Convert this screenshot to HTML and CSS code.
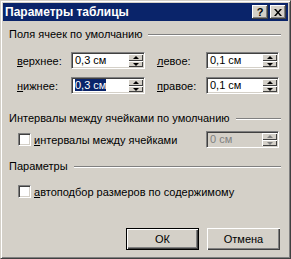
FILE: index.html
```html
<!DOCTYPE html>
<html lang="ru">
<head>
  <meta charset="UTF-8">
  <title>Параметры таблицы</title>
  <link rel="stylesheet" href="styles.css">
</head>
<body>
<div class="window">
  <div class="titlebar">
    <span class="title">Параметры таблицы</span>
    <div class="caption-buttons">
      <span class="cap-btn help">?</span>
      <span class="cap-btn close">
        <svg width="8" height="7" viewBox="0 0 8 7"><path d="M0 0h2l2 2.5L6 0h2L5 3.5 8 7H6L4 4.5 2 7H0l3-3.5z" fill="#000"/></svg>
      </span>
    </div>
  </div>

  <div class="content">
    <!-- поля ячеек -->
    <div class="group-head first">Поля ячеек по умолчанию<span class="rule"></span></div>
    <div class="margins">
      <span class="label"><u>в</u>ерхнее:</span>
      <div class="field">
        <span class="value">0,3 см</span>
        <span class="spinner"><span class="spin up"></span><span class="spin down"></span></span>
      </div>
      <span class="label right"><u>л</u>евое:</span>
      <div class="field">
        <span class="value">0,1 см</span>
        <span class="spinner"><span class="spin up"></span><span class="spin down"></span></span>
      </div>

      <span class="label"><u>н</u>ижнее:</span>
      <div class="field">
        <span class="value"><span class="sel">0,3 см</span></span>
        <span class="spinner"><span class="spin up"></span><span class="spin down"></span></span>
      </div>
      <span class="label right"><u>п</u>равое:</span>
      <div class="field">
        <span class="value">0,1 см</span>
        <span class="spinner"><span class="spin up"></span><span class="spin down"></span></span>
      </div>
    </div>

    <!-- интервалы -->
    <div class="group-head">Интервалы между ячейками по умолчанию<span class="rule"></span></div>
    <div class="check-row spacing">
      <span class="checkbox"></span>
      <span class="check-label"><u>и</u>нтервалы между ячейками</span>
      <div class="field disabled">
        <span class="value">0 см</span>
        <span class="spinner"><span class="spin up"></span><span class="spin down"></span></span>
      </div>
    </div>

    <!-- параметры -->
    <div class="group-head">Параметры<span class="rule"></span></div>
    <div class="check-row autofit">
      <span class="checkbox"></span>
      <span class="check-label"><u>а</u>втоподбор размеров по содержимому</span>
    </div>

    <div class="buttons">
      <span class="btn default">ОК</span>
      <span class="btn">Отмена</span>
    </div>
  </div>
</div>
</body>
</html>
```

FILE: styles.css
```css
body {
  margin: 0;
  font-family: "Liberation Sans", Arial, sans-serif;
  font-size: 11px;
  color: #000;
  background: #d4d0c8;
}
.window {
  width: 291px;
  height: 259px;
  box-sizing: border-box;
  background: #d4d0c8;
  border: 1px solid;
  border-color: #d4d0c8 #404040 #404040 #d4d0c8;
  box-shadow: inset 1px 1px #fff, inset -1px -1px #808080;
  padding: 2px;
  display: flex;
  flex-direction: column;
}
.titlebar {
  height: 18px;
  flex: none;
  background: #0a246a;
  color: #fff;
  display: flex;
  align-items: center;
  justify-content: space-between;
  padding: 0 2px;
}
.title {
  font-weight: bold;
  font-size: 12px;
}
.caption-buttons {
  display: flex;
  gap: 2px;
}
.cap-btn {
  width: 16px;
  height: 14px;
  box-sizing: border-box;
  background: #d4d0c8;
  box-shadow: inset -1px -1px #404040, inset 1px 1px #fff, inset -2px -2px #808080;
  display: flex;
  align-items: center;
  justify-content: center;
  color: #000;
}
.cap-btn.help {
  font-weight: bold;
  font-size: 11px;
  line-height: 14px;
}
.content {
  flex: 1;
  display: flex;
  flex-direction: column;
  padding: 0 7px 6px 6px;
}
.group-head {
  display: flex;
  align-items: center;
  gap: 6px;
  height: 13px;
  line-height: 13px;
  margin-top: 18px;
}
.group-head.first {
  margin-top: 7px;
}
.rule {
  flex: 1;
  border-top: 1px solid #808080;
  border-bottom: 1px solid #fff;
}
.margins {
  display: grid;
  grid-template-columns: 54px 74px 61px 73px;
  grid-auto-rows: 17px;
  row-gap: 8px;
  margin-top: 11px;
  padding-left: 8px;
  align-items: center;
}
.label.right {
  padding-left: 12px;
}
.field {
  height: 17px;
  box-sizing: border-box;
  background: #fff;
  border: 1px solid;
  border-color: #808080 #fff #fff #808080;
  box-shadow: inset 1px 1px #404040, inset -1px -1px #d4d0c8;
  padding: 1px 1px 1px 2px;
  display: flex;
  align-items: center;
  justify-content: space-between;
}
.value {
  line-height: 13px;
  padding-left: 1px;
}
.sel {
  background: #0a246a;
  color: #fff;
}
.spinner {
  width: 15px;
  height: 13px;
  display: flex;
  flex-direction: column;
}
.spin {
  background: #d4d0c8;
  box-shadow: inset 1px 1px #fff, inset -1px -1px #404040;
  display: flex;
  align-items: center;
  justify-content: center;
}
.spin.up {
  height: 7px;
}
.spin.down {
  height: 6px;
}
.spin::before {
  content: "";
  border-left: 3px solid transparent;
  border-right: 3px solid transparent;
}
.spin.up::before {
  border-bottom: 3px solid #000;
}
.spin.down::before {
  border-top: 3px solid #000;
}
.field.disabled {
  width: 73px;
  margin-left: auto;
  margin-right: 2px;
  background: #d4d0c8;
  color: #808080;
}
.field.disabled .spin.up::before {
  border-bottom-color: #808080;
}
.field.disabled .spin.down::before {
  border-top-color: #808080;
}
.check-row {
  display: flex;
  align-items: center;
  padding-left: 9px;
}
.check-row.spacing {
  height: 17px;
  margin-top: 6px;
}
.check-row.autofit {
  height: 13px;
  margin-top: 12px;
}
.group-head + .check-row.autofit {
  margin-top: 12px;
}
.check-row.spacing + .group-head {
  margin-top: 12px;
}
.checkbox {
  width: 13px;
  height: 13px;
  box-sizing: border-box;
  background: #fff;
  border: 1px solid;
  border-color: #808080 #fff #fff #808080;
  box-shadow: inset 1px 1px #404040, inset -1px -1px #d4d0c8;
}
.check-label {
  margin-left: 3px;
}
.buttons {
  margin-top: auto;
  display: flex;
  justify-content: flex-end;
  gap: 8px;
  padding-right: 1px;
}
.btn {
  width: 73px;
  height: 22px;
  box-sizing: border-box;
  background: #d4d0c8;
  box-shadow: inset 1px 1px #fff, inset -1px -1px #404040, inset -2px -2px #808080;
  display: flex;
  align-items: center;
  justify-content: center;
}
.btn.default {
  border: 1px solid #000;
}
```
